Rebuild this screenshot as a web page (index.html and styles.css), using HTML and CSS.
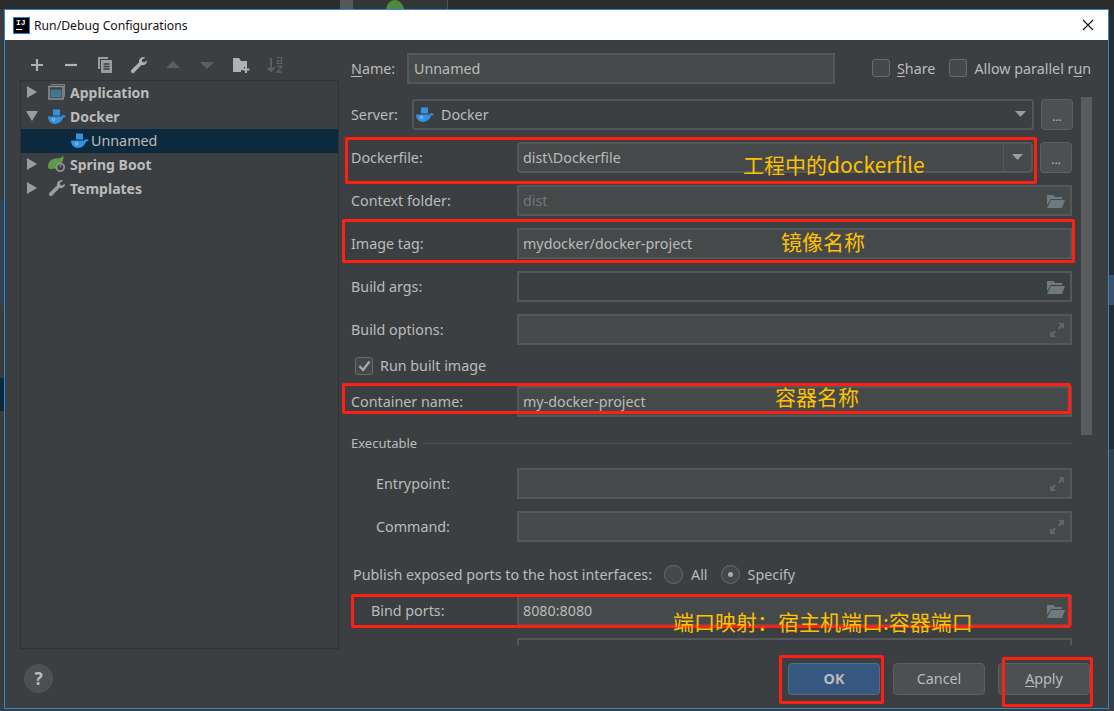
FILE: index.html
```html
<!DOCTYPE html>
<html lang="zh">
<head>
<meta charset="utf-8">
<title>Run/Debug Configurations</title>
<link rel="stylesheet" href="styles.css">
</head>
<body>
<div class="desktop">
  <div class="bg-top-tab"></div>
  <div class="bg-top-line"></div>
  <svg class="bg-leaf" width="20" height="9" viewBox="0 0 20 9"><path d="M1 9C2 3 6 0 10 0s8 4 9 9z" fill="#4d8a3c"/></svg>
  <div class="bg-left-a"></div>
  <div class="bg-left-b"></div>
  <div class="bg-right-base"></div>
  <div class="bg-right-a"></div>

  <section class="dialog">
    <header class="titlebar">
      <div class="ij-logo"><span class="ij-text">IJ</span><span class="ij-bar"></span></div>
      <span class="title">Run/Debug Configurations</span>
      <svg class="close" width="12" height="12" viewBox="0 0 12 12"><path d="M1 1l10 10M11 1L1 11" stroke="#111" stroke-width="1.1" fill="none"/></svg>
    </header>

    <div class="body">
      <aside class="side">
        <div class="toolbar">
          <svg width="16" height="16" viewBox="0 0 16 16"><path d="M8 2v12M2 8h12" stroke="#afb1b3" stroke-width="2.2"/></svg>
          <svg width="16" height="16" viewBox="0 0 16 16"><path d="M2 8h12" stroke="#afb1b3" stroke-width="2.2"/></svg>
          <svg width="18" height="18" viewBox="0 0 18 18"><path d="M2 1h10v2H4v10H2z" fill="#9a9c9e"/><path d="M5 4h11v13H5z" fill="#9a9c9e"/><path d="M7.500 8h6M7.500 10.500h6M7.500 13h6" stroke="#3c3f41" stroke-width="1.300"/></svg>
          <svg width="18" height="18" viewBox="0 0 18 18"><path d="M16.800 4.500c.5 2.300-1.300 4.700-4 4.700-.5 0-1-.1-1.400-.2L4.300 16.600c-.8.800-2 .8-2.800 0s-.8-2 0-2.800l7.500-7.200c-.5-2.800 1.500-5.600 4.700-5.600.5 0 1 .1 1.400.2L11.800 4l.5 2 2 .5z" fill="#afb1b3"/></svg>
          <svg class="dim" width="16" height="16" viewBox="0 0 16 16"><path d="M8 4l7 7H1z" fill="#5c5f61"/></svg>
          <svg class="dim" width="16" height="16" viewBox="0 0 16 16"><path d="M8 12L1 5h14z" fill="#5c5f61"/></svg>
          <svg width="18" height="18" viewBox="0 0 18 18"><path d="M1 2h6l2 3h6v6h-3v3H9v2H1z" fill="#afb1b3"/><path d="M14 10v7M10.500 13.500h7" stroke="#afb1b3" stroke-width="2"/></svg>
          <svg width="18" height="18" viewBox="0 0 18 18"><path d="M5 2v13M1.500 11.500L5 15l3.500-3.500" stroke="#5f6264" stroke-width="1.800" fill="none"/><path d="M11 1.500h4.500v6h-1.200M15 4.500h-3.500v3h3.500" stroke="#5f6264" stroke-width="1.200" fill="none"/><path d="M11 10.500h5l-5 5.500h5" stroke="#5f6264" stroke-width="1.300" fill="none"/></svg>
        </div>
        <div class="tree">
          <div class="tree-row">
            <svg class="arrow" width="12" height="12" viewBox="0 0 12 12"><path d="M1 0l10 6-10 6z" fill="#9a9c9e"/></svg>
            <svg class="node-icon" width="18" height="18" viewBox="0 0 18 18"><path d="M3 1h14v13h-1V2H3z" fill="#7d8082"/><rect x="1" y="3.500" width="14" height="12.500" fill="none" stroke="#8f9294" stroke-width="1.500"/><rect x="2.500" y="6.500" width="11" height="8" fill="#40778f"/></svg>
            <span class="node-bold">Application</span>
          </div>
          <div class="tree-row">
            <svg class="arrow" width="12" height="12" viewBox="0 0 12 12"><path d="M0 1h12L6 11z" fill="#9a9c9e"/></svg>
            <svg class="node-icon" width="18" height="18" viewBox="0 0 18 18"><use href="#whale"/></svg>
            <span class="node-bold">Docker</span>
          </div>
          <div class="tree-row selected">
            <svg class="node-icon child" width="18" height="18" viewBox="0 0 18 18"><use href="#whale"/></svg>
            <span class="node-plain">Unnamed</span>
          </div>
          <div class="tree-row">
            <svg class="arrow" width="12" height="12" viewBox="0 0 12 12"><path d="M1 0l10 6-10 6z" fill="#9a9c9e"/></svg>
            <svg class="node-icon" width="18" height="18" viewBox="0 0 19 18"><path d="M0 12C0 6 5 3 9 3c3 0 6-1 7-3 1 3 0 6-2 8l-4 6H4C2 15 0 14 0 12z" fill="#5d9a48"/><circle cx="13" cy="12.500" r="5" fill="#8f9294"/><circle cx="13" cy="12.500" r="3" fill="#3c3f41"/><path d="M13 10v2.500" stroke="#a9abad" stroke-width="1"/></svg>
            <span class="node-bold">Spring Boot</span>
          </div>
          <div class="tree-row">
            <svg class="arrow" width="12" height="12" viewBox="0 0 12 12"><path d="M1 0l10 6-10 6z" fill="#9a9c9e"/></svg>
            <svg class="node-icon" width="18" height="18" viewBox="0 0 18 18"><path d="M16.800 4.500c.5 2.300-1.300 4.700-4 4.700-.5 0-1-.1-1.400-.2L4.300 16.600c-.8.800-2 .8-2.800 0s-.8-2 0-2.800l7.500-7.200c-.5-2.800 1.500-5.600 4.700-5.600.5 0 1 .1 1.400.2L11.800 4l.5 2 2 .5z" fill="#9a9c9e"/></svg>
            <span class="node-bold">Templates</span>
          </div>
        </div>
      </aside>

      <main class="form">
        <div class="row row-name">
          <label class="lbl lbl-name"><u>N</u>ame:</label>
          <div class="field field-name filled">Unnamed</div>
          <div class="check-group">
            <span class="check"></span><span class="check-text"><u>S</u>hare</span>
            <span class="check check-second"></span><span class="check-text">Allow parallel r<u>u</u>n</span>
          </div>
        </div>
        <div class="row row-server">
          <label class="lbl lbl-server">Server:</label>
          <div class="field combo">
            <svg class="node-icon" width="18" height="18" viewBox="0 0 18 18"><use href="#whale"/></svg>
            <span class="combo-text">Docker</span>
            <svg class="caret" width="12" height="7" viewBox="0 0 12 7"><path d="M0 0h11L5.500 6z" fill="#9a9c9e"/></svg>
          </div>
          <button class="dots">...</button>
        </div>
        <div class="row">
          <label class="lbl">Dockerfile:</label>
          <div class="field combo filled combo-split">
            <span class="grow">dist\Dockerfile</span>
            <span class="split"><svg width="12" height="7" viewBox="0 0 12 7"><path d="M0 0h11L5.500 6z" fill="#9a9c9e"/></svg></span>
          </div>
          <button class="dots">...</button>
        </div>
        <div class="row">
          <label class="lbl">Context folder:</label>
          <div class="field filled disabled"><span class="grow">dist</span><svg class="folder" width="18" height="16" viewBox="0 0 18 16"><use href="#folder"/></svg></div>
        </div>
        <div class="row">
          <label class="lbl">Image tag:</label>
          <div class="field filled">mydocker/docker-project</div>
        </div>
        <div class="row">
          <label class="lbl">Build args:</label>
          <div class="field"><span class="grow"></span><svg class="folder" width="18" height="16" viewBox="0 0 18 16"><use href="#folder"/></svg></div>
        </div>
        <div class="row">
          <label class="lbl">Build options:</label>
          <div class="field filled"><span class="grow"></span><svg class="expand" width="16" height="16" viewBox="0 0 16 16"><use href="#expand"/></svg></div>
        </div>
        <div class="row row-run">
          <span class="check checked"><svg width="13" height="12" viewBox="0 0 13 12"><path d="M1.500 6l3.500 4 6.500-8.500" stroke="#a9abad" stroke-width="2.200" fill="none"/></svg></span>
          <span class="check-text">Run built image</span>
        </div>
        <div class="row">
          <label class="lbl">Container name:</label>
          <div class="field filled">my-docker-project</div>
        </div>
        <div class="section-title"><span>Executable</span><i class="rule"></i></div>
        <div class="row">
          <label class="lbl indent">Entrypoint:</label>
          <div class="field filled"><span class="grow"></span><svg class="expand" width="16" height="16" viewBox="0 0 16 16"><use href="#expand"/></svg></div>
        </div>
        <div class="row">
          <label class="lbl indent">Command:</label>
          <div class="field filled"><span class="grow"></span><svg class="expand" width="16" height="16" viewBox="0 0 16 16"><use href="#expand"/></svg></div>
        </div>
        <div class="publish">
          <span class="publish-text">Publish exposed ports to the host interfaces:</span>
          <span class="radio"></span><span class="radio-text radio-all">All</span>
          <span class="radio on"></span><span class="radio-text">Specify</span>
        </div>
        <div class="row">
          <label class="lbl indent-b">Bind ports:</label>
          <div class="field filled"><span class="grow">8080:8080</span><svg class="folder" width="18" height="16" viewBox="0 0 18 16"><use href="#folder"/></svg></div>
        </div>
        <div class="row">
          <span class="lbl"></span>
          <div class="field"></div>
        </div>
      </main>
      <div class="scrollbar"></div>
    </div>

    <footer class="footer">
      <span class="help">?</span>
      <div class="actions">
        <button class="btn primary">OK</button>
        <button class="btn">Cancel</button>
        <button class="btn"><u>A</u>pply</button>
      </div>
    </footer>
  </section>

  <div class="mark mark-dockerfile"></div>
  <div class="mark mark-image"></div>
  <div class="mark mark-container"></div>
  <div class="mark mark-bind"></div>
  <div class="mark mark-ok"></div>
  <div class="mark mark-apply"></div>
  <span class="note note-dockerfile">工程中的dockerfile</span>
  <span class="note note-image">镜像名称</span>
  <span class="note note-container">容器名称</span>
  <span class="note note-bind">端口映射：宿主机端口:容器端口</span>

  <svg class="defs" width="0" height="0">
    <defs>
      <g id="whale">
        <rect x="5" y="2.500" width="7" height="6" fill="#3592e0"/>
        <path d="M0 9.500h13.500c.3-1 1.500-1.500 3-1l1.300.8c-.8 1-1.800 1.300-2.800 1.300C14 14.500 10.500 17 7 17 3 17 0 14 0 9.500z" fill="#3592e0"/>
        <circle cx="5.500" cy="12.500" r="1.200" fill="none" stroke="#cfe4f7" stroke-width=".6"/>
      </g>
      <g id="folder">
        <path d="M0 2h6l2 2h7v2H4L0 12z" fill="#6e7a80"/>
        <path d="M4 7h14l-3 8H0z" fill="#6e7a80"/>
      </g>
      <g id="expand" fill="#646769">
        <path d="M9 1h6v6l-2-2-2.500 2.500-1.500-1.500L11.500 3z"/>
        <path d="M7 15H1V9l2 2 2.500-2.500L7 10l-2.500 2.500z"/>
      </g>
    </defs>
  </svg>
</div>
</body>
</html>
```
FILE: styles.css
```css
* { box-sizing: border-box; }
html, body { margin: 0; padding: 0; height: 100%; }
body { background: #2b2b2b; overflow: hidden; }
u { text-underline-offset: 2px; }

.desktop {
  position: relative;
  width: 1114px;
  height: 711px;
  overflow: hidden;
  background: #3a3d3f;
  font-family: "Noto Sans", "Noto Sans CJK SC", sans-serif;
  font-size: 14.3px;
  color: #bbbbbb;
}

.bg-top-tab { position: absolute; left: 0; right: 0; top: 0; height: 9px; background: #2b2b2b; }
.bg-top-line { position: absolute; left: 340px; top: 0; width: 108px; height: 9px; background: #333537; border-left: 13px solid #56585a; border-right: 1px solid #555; }
.bg-leaf { position: absolute; left: 385px; top: 0; }
.bg-left-a { position: absolute; left: 0; top: 378px; width: 4px; height: 33px; background: #0d293e; }
.bg-left-b { position: absolute; left: 0; top: 200px; width: 4px; height: 105px; background: #2f4257; }
.bg-right-base { position: absolute; left: 1109px; top: 9px; width: 5px; height: 440px; background: #2b2b2b; }
.bg-right-a { position: absolute; left: 1109px; top: 275px; width: 5px; height: 30px; background: #3d5068; }
.defs { position: absolute; }

.dialog {
  position: absolute;
  left: 4px;
  top: 9px;
  width: 1105px;
  height: 700px;
  border: 1px solid #2e86d6;
  background: #3c3f41;
  display: flex;
  flex-direction: column;
}

.titlebar {
  height: 30px;
  flex: none;
  background: #fff;
  display: flex;
  align-items: center;
  padding: 0 14px 0 9px;
  font-family: "Noto Sans", sans-serif;
  font-size: 12.2px;
  color: #111;
}
.ij-logo {
  width: 15px;
  height: 15px;
  background: #000;
  outline: 1px solid #1f7fd6;
  display: flex;
  flex-direction: column;
  padding: 0 2px;
  margin-right: 5px;
}
.ij-text { font: bold 8px/10px "Liberation Mono", monospace; color: #fff; }
.ij-bar { width: 6px; height: 1px; background: #fff; margin-top: 1px; }
.title { flex: 1; white-space: nowrap; }

.body { flex: none; height: 605px; display: flex; position: relative; }

.side { width: 334px; padding-left: 15px; flex: none; display: flex; flex-direction: column; }
.toolbar { height: 40px; flex: none; display: flex; align-items: center; padding: 9px 0 0 8px; }
.toolbar svg { width: 18px; margin-right: 16px; flex: none; }

.tree {
  height: 569px;
  flex: none;
  border: 1px solid #323232;
}
.tree-row { height: 24px; display: flex; align-items: center; padding: 0 0 2px 5px; white-space: nowrap; }
.tree-row.selected { background: #0d293e; }
.arrow { margin-right: 10px; flex: none; }
.node-icon { flex: none; margin-right: 4px; }
.node-icon.child { margin-left: 45px; margin-right: 2px; }
.node-bold { font-weight: 700; font-size: 14px; }
.node-plain { color: #bbbbbb; }

.form {
  width: 760px;
  height: 605px;
  padding: 13px 0 0 12px;
  overflow: hidden;
  flex: none;
}
.row { display: flex; align-items: center; height: 31px; margin-bottom: 12px; white-space: nowrap; }
.lbl { width: 166px; flex: none; padding-bottom: 1px; }
.lbl-name { width: 56px; }
.lbl-server { width: 61px; }
.indent { padding-left: 25px; }
.indent-b { padding-left: 20px; }
.row-name { margin-bottom: 15px; }

.field {
  flex: none;
  width: 555px;
  height: 31px;
  border: 2px solid #555758;
  padding: 0 4px 1px 4px;
  display: flex;
  align-items: center;
  color: #bbbbbb;
}
.filled { background: #45494a; }
.disabled { color: #777; }
.grow { flex: 1; }
.field-name { width: 428px; padding-left: 5px; }
.combo { border-radius: 4px; width: 516px; }
.row-server .combo { width: 622px; padding-left: 2px; }
.combo-text { flex: 1; margin-left: 3px; }
.caret { margin-right: 1px; }
.combo-split { padding-right: 0; padding-bottom: 0; }
.split { width: 28px; height: 100%; border-left: 1px solid #555758; display: flex; align-items: center; justify-content: center; }

.check-group { display: flex; align-items: center; margin-left: 37px; padding-bottom: 1px; }
.check {
  width: 18px;
  height: 18px;
  border: 1px solid #6b6b6b;
  border-radius: 3px;
  background: #43494a;
  display: inline-flex;
  align-items: center;
  justify-content: center;
  flex: none;
}
.check-text { margin-left: 7px; }
.check-second { margin-left: 14px; }

.dots {
  width: 32px;
  height: 31px;
  margin-left: 7px;
  border: 1px solid #5e6060;
  border-radius: 4px;
  background: #4c5052;
  color: #bbb;
  font: 12px "Noto Sans", sans-serif;
  padding: 4px 0 0;
}

.folder { flex: none; margin-right: 1px; margin-top: 1px; }
.expand { flex: none; margin-right: 1px; margin-top: 1px; }

.row-run { height: 21px; margin: -2px 0 10px 4px; }

.section-title { display: flex; align-items: center; height: 20px; margin: 16px 0 15px; font-size: 13px; gap: 6px; }
.rule { width: 649px; height: 1px; background: #515151; }

.publish { display: flex; align-items: center; height: 20px; margin: 22px 0 11px 2px; white-space: nowrap; }
.radio { width: 19px; height: 19px; border: 1px solid #6b6b6b; border-radius: 50%; background: #43494a; flex: none; position: relative; }
.publish-text { margin-right: 12px; }
.radio-text { margin-left: 8px; }
.radio-all { margin-right: 13px; }
.radio.on::after { content: ""; position: absolute; left: 6px; top: 6px; width: 5px; height: 5px; border-radius: 50%; background: #a9abad; }

.scrollbar { position: absolute; left: 1076px; top: 57px; width: 11px; height: 338px; background: #595b5d; }

.footer {
  flex: 1;
  display: flex;
  align-items: center;
  justify-content: space-between;
  padding: 4px 18px 0 19px;
}
.help {
  width: 29px;
  height: 29px;
  border-radius: 50%;
  background: #4c5052;
  border: 1px solid #555;
  display: flex;
  align-items: center;
  justify-content: center;
  font-weight: 700;
  font-size: 17px;
  color: #bbb;
}
.actions { display: flex; gap: 13px; }
.btn {
  width: 92px;
  height: 32px;
  border: 1px solid #5e6060;
  border-radius: 4px;
  background: #4c5052;
  color: #bbbbbb;
  font: 14.3px "Noto Sans", sans-serif;
  padding: 0;
}
.btn.primary { background: #365880; border-color: #4c708c; font-weight: 700; }

.mark { position: absolute; border: 3px solid #ff2015; border-radius: 2px; pointer-events: none; }
.mark-dockerfile { left: 345px; top: 137px; width: 692px; height: 47px; }
.mark-image { left: 342px; top: 219px; width: 733px; height: 44px; }
.mark-container { left: 342px; top: 383px; width: 729px; height: 31px; }
.mark-bind { left: 351px; top: 594px; width: 720px; height: 34px; }
.mark-ok { left: 779px; top: 655px; width: 105px; height: 49px; }
.mark-apply { left: 1002px; top: 657px; width: 91px; height: 50px; }

.note {
  position: absolute;
  font-family: "Noto Sans CJK SC", "Noto Sans", sans-serif;
  font-size: 21px;
  line-height: 28px;
  color: #ffc000;
  white-space: nowrap;
}
.note-dockerfile { left: 743px; top: 150px; }
.note-image { left: 781px; top: 227px; }
.note-container { left: 775px; top: 382px; }
.note-bind { left: 673px; top: 607px; }
```
